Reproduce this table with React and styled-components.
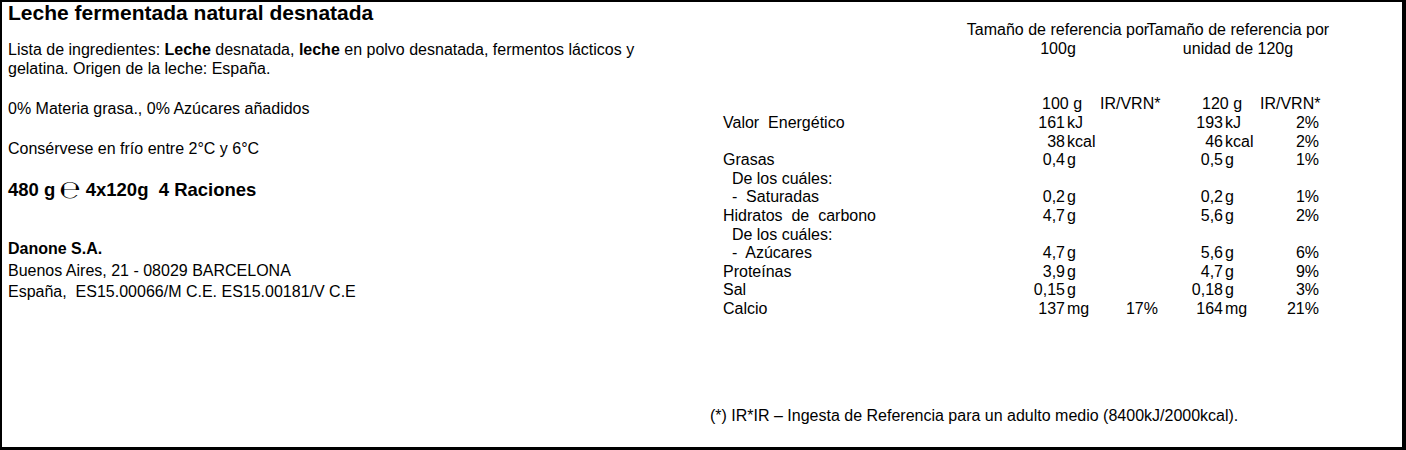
import styled, { createGlobalStyle } from "styled-components";

const GlobalStyle = createGlobalStyle`
  body {
    margin: 0;
    background: #fff;
    font-family: "Liberation Sans", Arial, sans-serif;
    color: #000;
  }
`;

const rows = [
  { label: "Valor  Energético", n1: "161", u1: "kJ", n2: "193", u2: "kJ", p2: "2%" },
  { label: "", n1: "38", u1: "kcal", n2: "46", u2: "kcal", p2: "2%" },
  { label: "Grasas", n1: "0,4", u1: "g", n2: "0,5", u2: "g", p2: "1%" },
  { label: "  De los cuáles:" },
  { label: "  -  Saturadas", n1: "0,2", u1: "g", n2: "0,2", u2: "g", p2: "1%" },
  { label: "Hidratos  de  carbono", n1: "4,7", u1: "g", n2: "5,6", u2: "g", p2: "2%" },
  { label: "  De los cuáles:" },
  { label: "  -  Azúcares", n1: "4,7", u1: "g", n2: "5,6", u2: "g", p2: "6%" },
  { label: "Proteínas", n1: "3,9", u1: "g", n2: "4,7", u2: "g", p2: "9%" },
  { label: "Sal", n1: "0,15", u1: "g", n2: "0,18", u2: "g", p2: "3%" },
  { label: "Calcio", n1: "137", u1: "mg", p1: "17%", n2: "164", u2: "mg", p2: "21%" },
];

const App = () => {
  return (
    <>
      <GlobalStyle />
      <Frame>
        <Info>
          <Title>Leche fermentada natural desnatada</Title>
          <Para $top={16}>
            Lista de ingredientes: <b>Leche</b> desnatada, <b>leche</b> en polvo
            desnatada, fermentos lácticos y gelatina. Origen de la leche: España.
          </Para>
          <Para $top={20.5}>0% Materia grasa., 0% Azúcares añadidos</Para>
          <Para $top={21}>Consérvese en frío entre 2°C y 6°C</Para>
          <Weight>
            480 g<Estimated>℮</Estimated>4x120g{"  "}4 Raciones
          </Weight>
          <Company>
            <b>Danone S.A.</b>
            <br />
            Buenos Aires, 21 - 08029 BARCELONA
            <br />
            {"España,  ES15.00066/M C.E. ES15.00181/V C.E"}
          </Company>
        </Info>
        <Nutrition>
          <HeadRow>
            <HeadCell>
              <span>Tamaño de referencia por</span>
              <span>100g</span>
            </HeadCell>
            <HeadCell>
              <span>Tamaño de referencia por</span>
              <span>unidad de 120g</span>
            </HeadCell>
          </HeadRow>
          <Table>
            <Label $head />
            <Portion $head $pad={42}>100 g</Portion>
            <Pct $head>IR/VRN*</Pct>
            <Portion $head $pad={44}>120 g</Portion>
            <Pct $head>IR/VRN*</Pct>
            {rows.map((r, i) => (
              <Row key={i} {...r} />
            ))}
          </Table>
          <Footnote>
            (*) IR*IR – Ingesta de Referencia para un adulto medio (8400kJ/2000kcal).
          </Footnote>
        </Nutrition>
      </Frame>
    </>
  );
};

const Row = ({ label, n1, u1, p1, n2, u2, p2 }) => (
  <>
    <Label>{label}</Label>
    <Num>{n1}</Num>
    <Unit>{u1}</Unit>
    <Pct>{p1}</Pct>
    <Num>{n2}</Num>
    <Unit>{u2}</Unit>
    <Pct>{p2}</Pct>
  </>
);

export default App;

const Frame = styled.div`
  box-sizing: border-box;
  width: 1406px;
  height: 450px;
  display: flex;
  background: #fff;
  border-style: solid;
  border-color: #000;
  border-width: 2px 4px 3px 2px;
  font-size: 16px;
`;

const Info = styled.section`
  box-sizing: border-box;
  width: 698px;
  flex-shrink: 0;
  padding: 0 30px 0 6px;
  display: flex;
  flex-direction: column;
`;

const Title = styled.h1`
  margin: 0;
  font-size: 21px;
  line-height: 22px;
  font-weight: bold;
`;

const Para = styled.p`
  margin: ${(p) => p.$top}px 0 0;
  line-height: 19px;
`;

const Weight = styled.p`
  margin: 21.5px 0 0;
  font-size: 18.5px;
  line-height: 22px;
  font-weight: bold;
  white-space: pre;
`;

const Estimated = styled.span`
  font-family: "DejaVu Sans", sans-serif;
  font-weight: normal;
  font-size: 25px;
  line-height: 20px;
  vertical-align: -2px;
  margin: 0 5px 0 4px;
`;

const Company = styled.p`
  margin: 37px 0 0;
  line-height: 21.5px;
  white-space: pre;
`;

const Nutrition = styled.section`
  flex: 1;
  display: flex;
  flex-direction: column;
  padding-top: 17.5px;
`;

const HeadRow = styled.div`
  display: grid;
  grid-template-columns: 245px 180px 180px;
  margin-left: 23px;
  line-height: 19px;
`;

const HeadCell = styled.div`
  display: flex;
  flex-direction: column;
  align-items: center;
  white-space: nowrap;
  &:first-child {
    grid-column: 2;
  }
`;

const Table = styled.div`
  display: grid;
  grid-template-columns: 277px 65px 35px 58px 65px 37px 59px;
  margin: 35.5px 0 0 23px;
  white-space: pre;
`;

const Cell = styled.div`
  line-height: ${(p) => (p.$head ? "21px" : "18.6px")};
  min-height: ${(p) => (p.$head ? "21px" : "18.6px")};
`;

const Label = styled(Cell)``;

const Num = styled(Cell)`
  text-align: right;
`;

const Unit = styled(Cell)`
  padding-left: 2px;
`;

const Pct = styled(Cell)`
  text-align: right;
`;

const Portion = styled(Cell)`
  grid-column: span 2;
  padding-left: ${(p) => p.$pad}px;
`;

const Footnote = styled.p`
  margin: auto 0 0;
  padding: 0 0 22.5px 10px;
  line-height: 19px;
`;
